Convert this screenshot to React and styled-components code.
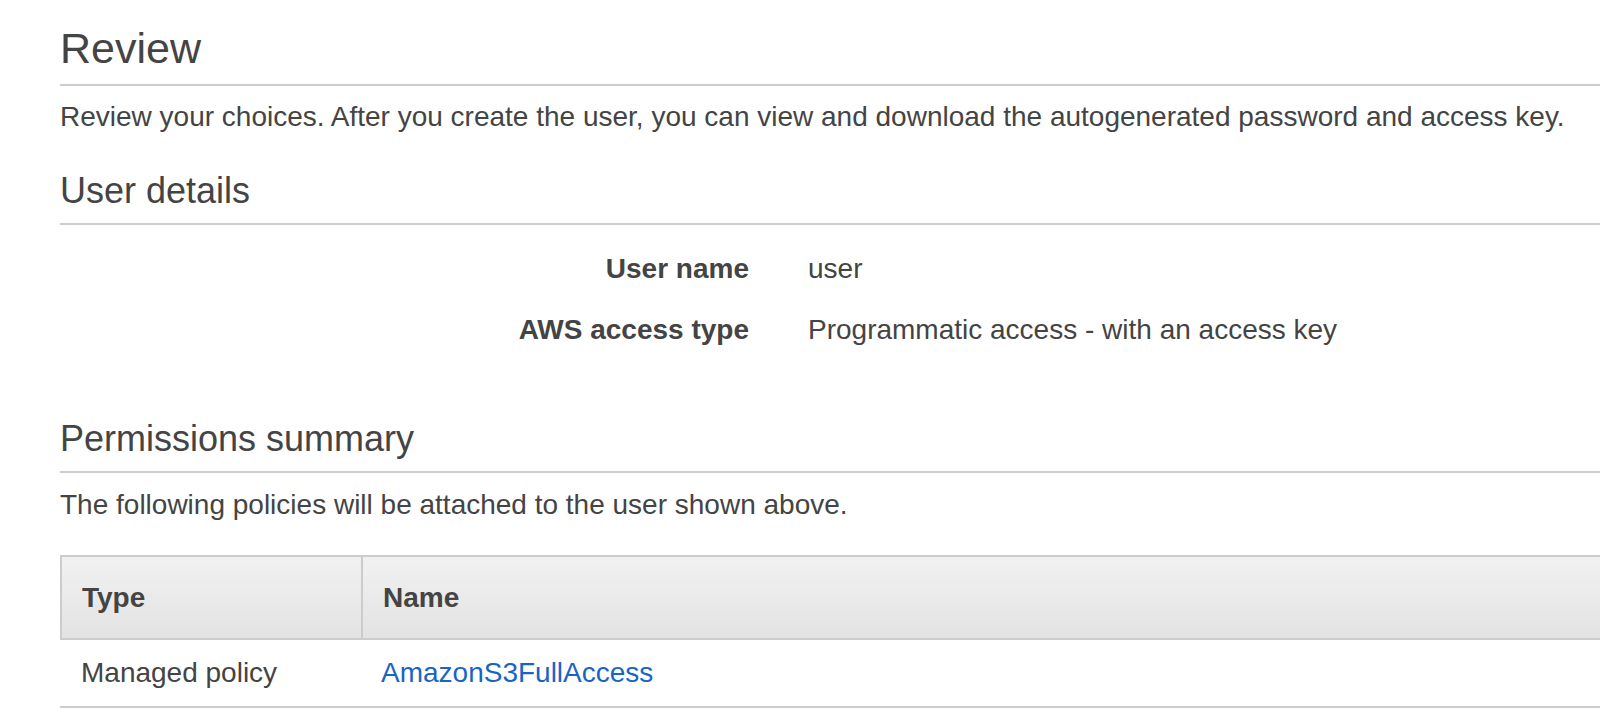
import React from 'react'
import styled, { createGlobalStyle } from 'styled-components'

const GlobalStyle = createGlobalStyle`
    html, body {
        margin: 0;
        padding: 0;
        background: #fff;
        overflow: hidden;
    }
    body {
        font-family: "Liberation Sans", Arial, sans-serif;
        color: #444;
    }
`

const details = [
    { label: 'User name', value: 'user' },
    { label: 'AWS access type', value: 'Programmatic access - with an access key' },
]

const policies = [
    { type: 'Managed policy', name: 'AmazonS3FullAccess' },
]

function App() {
    return (
        <Page>
            <GlobalStyle />
            <Title>Review</Title>
            <Lead>
                Review your choices. After you create the user, you can view and download the autogenerated password and access key.
            </Lead>

            <SectionTitle $top={32}>User details</SectionTitle>
            <Details>
                {details.map(d => (
                    <React.Fragment key={d.label}>
                        <Label>{d.label}</Label>
                        <Value>{d.value}</Value>
                    </React.Fragment>
                ))}
            </Details>

            <SectionTitle $top={67}>Permissions summary</SectionTitle>
            <Lead $top={12}>The following policies will be attached to the user shown above.</Lead>

            <Table>
                <HeadRow>
                    <HeadCell>Type</HeadCell>
                    <HeadCell $divider>Name</HeadCell>
                </HeadRow>
                {policies.map(p => (
                    <Row key={p.name}>
                        <Cell>{p.type}</Cell>
                        <Cell $wide>
                            <Link href="#">{p.name}</Link>
                        </Cell>
                    </Row>
                ))}
            </Table>
        </Page>
    )
}

const Page = styled.div`
    width: 1600px;
    padding: 23px 0 0 60px;
`

const Title = styled.h1`
    margin: 0;
    padding-bottom: 11px;
    border-bottom: 2px solid #ccc;
    font-size: 43px;
    line-height: 50px;
    font-weight: normal;
    color: #444;
`

const Lead = styled.p`
    margin: ${p => p.$top || 11}px 0 0;
    font-size: 28px;
    line-height: 40px;
`

const SectionTitle = styled.h2`
    margin: ${p => p.$top}px 0 0;
    padding-bottom: 10px;
    border-bottom: 2px solid #ccc;
    font-size: 36px;
    line-height: 44px;
    font-weight: normal;
    color: #444;
`

const Details = styled.div`
    display: grid;
    grid-template-columns: 689px 1fr;
    column-gap: 59px;
    row-gap: 21px;
    padding-top: 24px;
    font-size: 28px;
    line-height: 40px;
`

const Label = styled.div`
    text-align: right;
    font-weight: bold;
`

const Value = styled.div``

const Table = styled.div`
    margin-top: 30px;
    font-size: 28px;
`

const HeadRow = styled.div`
    display: grid;
    grid-template-columns: 299px 1fr;
    border: 2px solid #ccc;
    background: linear-gradient(to bottom, #f1f1f1, #e3e3e3);
`

const HeadCell = styled.div`
    height: 81px;
    line-height: 82px;
    padding-left: 20px;
    font-weight: bold;
    border-left: ${p => (p.$divider ? '2px solid #ccc' : 'none')};
`

const Row = styled.div`
    display: grid;
    grid-template-columns: 301px 1fr;
    border-bottom: 2px solid #ccc;
`

const Cell = styled.div`
    height: 66px;
    line-height: 66px;
    padding-left: ${p => (p.$wide ? 20 : 21)}px;
`

const Link = styled.a`
    color: #1a64c2;
    text-decoration: none;
`

export default App
